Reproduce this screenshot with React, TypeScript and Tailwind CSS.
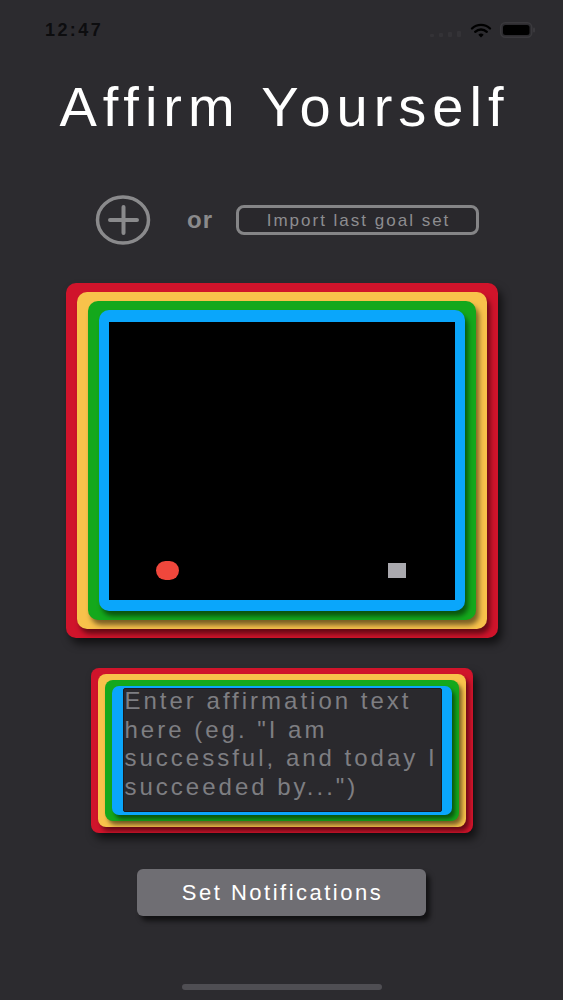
import React from "react";

const sans = { fontFamily: '"Liberation Sans", Arial, sans-serif' };

function StatusBar() {
  return (
    <div className="flex h-[50px] w-full items-start justify-between pl-[45px] pr-[27px] pt-[21px]">
      <span className="text-[18px] font-bold leading-[18px] tracking-[2.4px] text-[#0d0d0f]">12:47</span>
      <div className="flex items-center gap-[8px] pt-[1px]">
        <svg width="32" height="8" viewBox="0 0 32 8" className="mt-[6px]">
          <rect x="0" y="5" width="4" height="3" rx="1" fill="#343337" />
          <rect x="9" y="4" width="4" height="4" rx="1" fill="#343337" />
          <rect x="18" y="3" width="4" height="5" rx="1" fill="#343337" />
          <rect x="27" y="2" width="4" height="6" rx="1" fill="#343337" />
        </svg>
        <svg width="22" height="16" viewBox="0 0 22 16">
          <path d="M2 6.5 A13 13 0 0 1 20 6.5" fill="none" stroke="#000" strokeWidth="2.4" strokeLinecap="round" />
          <path d="M5.2 9.8 A8.5 8.5 0 0 1 16.8 9.8" fill="none" stroke="#000" strokeWidth="2.4" strokeLinecap="round" />
          <path d="M8.3 12.8 L11 15.6 L13.7 12.8 A3.8 3.8 0 0 0 8.3 12.8Z" fill="#000" />
        </svg>
        <svg width="36" height="16" viewBox="0 0 36 16">
          <rect x="0.75" y="0.75" width="31" height="14.5" rx="4.5" fill="none" stroke="#3a393d" strokeWidth="1.5" />
          <rect x="3" y="3" width="26.5" height="10" rx="2.5" fill="#000" />
          <rect x="33" y="5.5" width="2" height="5" rx="1" fill="#3a393d" />
        </svg>
      </div>
    </div>
  );
}

function PlusCircle() {
  return (
    <svg width="56" height="50" viewBox="0 0 56 50">
      <ellipse cx="28" cy="25" rx="25.5" ry="23" fill="none" stroke="#8a8a8c" strokeWidth="3.5" />
      <path d="M15 25 H42 M28.5 12 V38" stroke="#8a8a8c" strokeWidth="4" strokeLinecap="round" />
    </svg>
  );
}

function Preview() {
  return (
    <div className="w-[432px] rounded-[10px] bg-[#d0142b] px-[11px] py-[9px] shadow-[4px_6px_8px_rgba(0,0,0,0.6)]">
      <div className="rounded-[10px] bg-[#f8c24b] px-[11px] py-[9px] shadow-[3px_5px_5px_rgba(0,0,0,0.5)]">
        <div className="rounded-[10px] bg-[#14a81c] px-[11px] py-[9px] shadow-[3px_5px_5px_rgba(0,0,0,0.5)]">
          <div className="rounded-[10px] bg-[#0aa6fb] pb-[11px] pl-[10px] pr-[10px] pt-[12px] shadow-[3px_5px_5px_rgba(0,0,0,0.5)]">
            <div className="flex h-[278px] flex-col justify-end bg-black pb-[20px] pl-[47px] pr-[49px]">
              <div className="flex items-center justify-between">
                <div className="h-[19px] w-[23px] rounded-full bg-[#f0473c]" />
                <div className="h-[15px] w-[18px] bg-[#aaa9ae]" />
              </div>
            </div>
          </div>
        </div>
      </div>
    </div>
  );
}

function AffirmationBox() {
  const lines = ["Enter affirmation text", 'here (eg. "I am', "successful, and today I", 'succeeded by...")'];
  return (
    <div className="w-[382px] rounded-[8px] bg-[#d0142b] px-[7px] py-[6px] shadow-[4px_6px_8px_rgba(0,0,0,0.6)]">
      <div className="rounded-[8px] bg-[#f8c24b] px-[7px] py-[6px] shadow-[3px_4px_4px_rgba(0,0,0,0.5)]">
        <div className="rounded-[8px] bg-[#14a81c] px-[7px] py-[6px] shadow-[3px_4px_4px_rgba(0,0,0,0.5)]">
          <div className="rounded-[7px] bg-[#0aa6fb] pb-[3px] pl-[11px] pr-[10px] pt-[2px] shadow-[3px_4px_4px_rgba(0,0,0,0.5)]">
            <div className="h-[124px] overflow-hidden rounded-[2px] border border-[#1b1b1d] bg-[#2a292d] pl-[1px]">
              <div className="-mt-[2px] text-[24px] leading-[28.5px] tracking-[3px] text-[#7e7e82]" style={sans}>
                {lines.map((l) => (
                  <div key={l} className="whitespace-nowrap">{l}</div>
                ))}
              </div>
            </div>
          </div>
        </div>
      </div>
    </div>
  );
}

export default function App() {
  return (
    <div className="flex h-[1000px] w-[563px] flex-col items-center overflow-hidden bg-[#2c2b2f]" style={sans}>
      <StatusBar />

      <h1 className="mt-[25px] h-[64px] pl-[6px] text-[56px] font-normal leading-[64px] tracking-[6px] text-white">
        Affirm Yourself
      </h1>

      <div className="mt-[56px] flex h-[50px] w-full items-center pl-[95px]">
        <PlusCircle />
        <span className="ml-[36px] text-[24px] font-bold leading-none tracking-[1px] text-[#8a8a8c]">or</span>
        <button className="ml-[23px] flex h-[30px] w-[243px] items-center justify-center rounded-[8px] border-[3.5px] border-[#858587] bg-[#29282c] pl-[2px] text-[17px] leading-none tracking-[2px] text-[#8d8d90]">
          Import last goal set
        </button>
      </div>

      <div className="mt-[38px]">
        <Preview />
      </div>

      <div className="mt-[30px]">
        <AffirmationBox />
      </div>

      <button className="mt-[36px] flex h-[47px] w-[289px] items-center justify-center rounded-[6px] bg-[#6f6e73] pl-[2px] text-[22px] leading-none tracking-[2.5px] text-white shadow-[4px_5px_5px_rgba(0,0,0,0.6)]">
        Set Notifications
      </button>

      <div className="mt-[68px] h-[6px] w-[200px] rounded-full bg-[#4f4e53]" />
    </div>
  );
}
